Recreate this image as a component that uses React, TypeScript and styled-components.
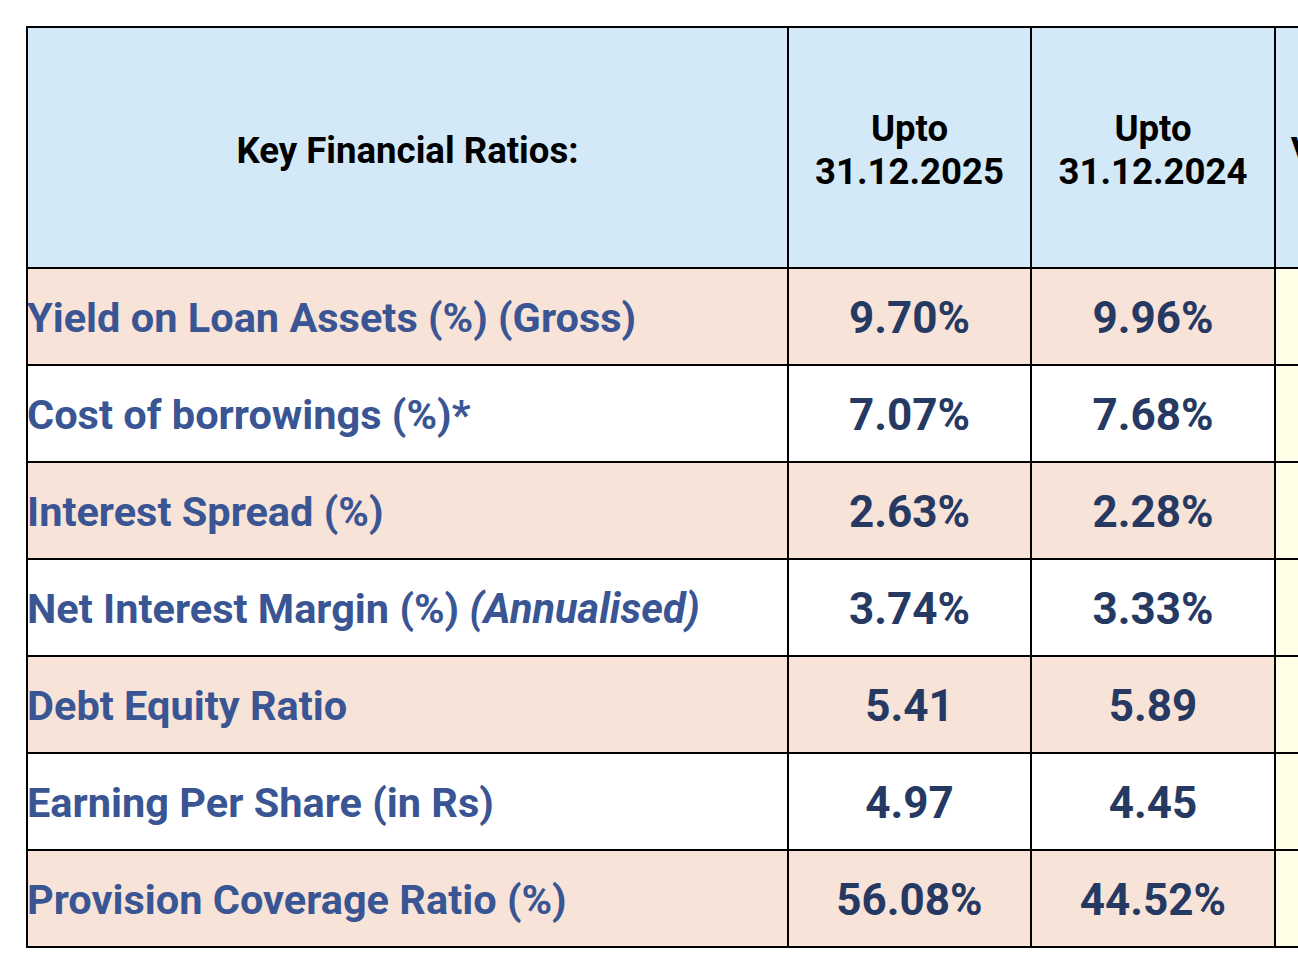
import styled, { createGlobalStyle } from "styled-components";

const GlobalStyle = createGlobalStyle`
  html, body {
    margin: 0;
    padding: 0;
    background: #ffffff;
    overflow: hidden;
  }
  body {
    font-family: Roboto, "Liberation Sans", Arial, sans-serif;
  }
`;

const Page = styled.div`
  width: 1298px;
  height: 970px;
  padding: 26px 0 0 26px;
  box-sizing: border-box;
  overflow: hidden;
`;

const Table = styled.div`
  display: grid;
  grid-template-columns: 761px 243px 244px 176px;
  grid-template-rows: 241px repeat(7, 97px);
  width: max-content;
  border-top: 2px solid #000;
  border-left: 2px solid #000;
`;

type Tone = "head" | "pink" | "white" | "yellow";

const bg: Record<Tone, string> = {
  head: "#d4e9f7",
  pink: "#f8e3d8",
  white: "#ffffff",
  yellow: "#fffee6",
};

const Cell = styled.div<{ $tone: Tone; $align?: "left" | "center" }>`
  display: flex;
  align-items: center;
  justify-content: ${(p) => (p.$align === "left" ? "flex-start" : "center")};
  text-align: ${(p) => (p.$align === "left" ? "left" : "center")};
  box-sizing: border-box;
  border-right: 2px solid #000;
  border-bottom: 2px solid #000;
  background: ${(p) => bg[p.$tone]};
  padding: ${(p) => (p.$align === "left" ? "2px 0 0" : "2px 8px 0")};
  white-space: nowrap;
  overflow: hidden;
`;

const HeadCell = styled(Cell)`
  padding-top: 5px;
  font-size: 36.6px;
  line-height: 43px;
  font-weight: 700;
  color: #000;
`;

const Row = styled.div`
  display: contents;
`;

const Label = styled.span`
  font-size: 41.5px;
  font-weight: 700;
  color: #3a5593;
  margin-left: -1px;

  em {
    font-style: italic;
  }
`;

const Value = styled.span`
  font-size: 44px;
  font-weight: 700;
  color: #263963;
`;

type Ratio = { label: React.ReactNode; cur: string; prev: string };

const ratios: Ratio[] = [
  { label: "Yield on Loan Assets (%) (Gross)", cur: "9.70%", prev: "9.96%" },
  { label: "Cost of borrowings (%)*", cur: "7.07%", prev: "7.68%" },
  { label: "Interest Spread (%)", cur: "2.63%", prev: "2.28%" },
  {
    label: (
      <>
        Net Interest Margin (%) <em>(Annualised)</em>
      </>
    ),
    cur: "3.74%",
    prev: "3.33%",
  },
  { label: "Debt Equity Ratio", cur: "5.41", prev: "5.89" },
  { label: "Earning Per Share (in Rs)", cur: "4.97", prev: "4.45" },
  { label: "Provision Coverage Ratio (%)", cur: "56.08%", prev: "44.52%" },
];

export default function App() {
  return (
    <Page>
      <GlobalStyle />
      <Table>
        <Row>
          <HeadCell $tone="head">Key Financial Ratios:</HeadCell>
          <HeadCell $tone="head">
            Upto
            <br />
            31.12.2025
          </HeadCell>
          <HeadCell $tone="head">
            Upto
            <br />
            31.12.2024
          </HeadCell>
          <HeadCell $tone="head">Variance</HeadCell>
        </Row>
        {ratios.map((r, i) => {
          const tone: Tone = i % 2 === 0 ? "pink" : "white";
          return (
            <Row key={i}>
              <Cell $tone={tone} $align="left">
                <Label>{r.label}</Label>
              </Cell>
              <Cell $tone={tone}>
                <Value>{r.cur}</Value>
              </Cell>
              <Cell $tone={tone}>
                <Value>{r.prev}</Value>
              </Cell>
              <Cell $tone="yellow" />
            </Row>
          );
        })}
      </Table>
    </Page>
  );
}
